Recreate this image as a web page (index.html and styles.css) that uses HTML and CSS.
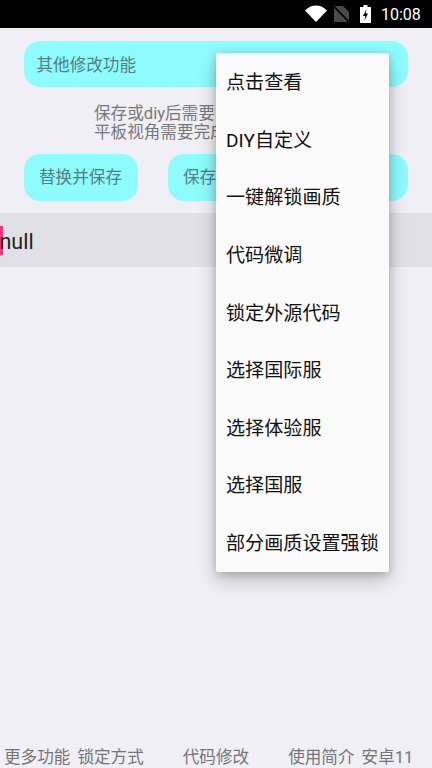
FILE: index.html
```html
<!DOCTYPE html>
<html lang="zh">
<head>
<meta charset="utf-8">
<title>修改</title>
<link rel="stylesheet" href="styles.css">
</head>
<body>
<div class="screen">
  <header class="status">
    <svg class="wifi" viewBox="0 0 22 17"><path d="M0 5.6C3 2.2 6.8.4 11 .4s8 1.8 11 5.2L11 17z" fill="#fff"/></svg>
    <svg class="sim" viewBox="0 0 15 16"><path d="M0 0h9l6 6v10H0z" fill="#4a4a4a"/><path d="M0 .5L15 16" stroke="#000" stroke-width="1.6"/></svg>
    <svg class="battery" viewBox="0 0 11 18"><path d="M3.500 0h4v2H11v16H0V2h3.500z" fill="#fff"/><path d="M6.500 4L3 11h2.300L4.500 15.500 8 8.500H5.700z" fill="#000"/></svg>
    <span class="time">10:08</span>
  </header>
  <main class="content">
    <div class="btn wide">其他修改功能</div>
    <p class="hint">保存或diy后需要<br>平板视角需要完成</p>
    <div class="btn-row">
      <div class="btn small">替换并保存</div>
      <div class="btn grow">保存</div>
    </div>
    <div class="editor"><span class="caret"></span><span class="code">null</span></div>
  </main>
  <nav class="tabs">
    <span class="tab t1">更多功能</span>
    <span class="tab t2">锁定方式</span>
    <span class="tab t3">代码修改</span>
    <span class="tab t4">使用简介</span>
    <span class="tab t5">安卓11</span>
  </nav>
  <ul class="menu">
    <li>点击查看</li>
    <li>DIY自定义</li>
    <li>一键解锁画质</li>
    <li>代码微调</li>
    <li>锁定外源代码</li>
    <li>选择国际服</li>
    <li>选择体验服</li>
    <li>选择国服</li>
    <li>部分画质设置强锁</li>
  </ul>
</div>
</body>
</html>
```
FILE: styles.css
```css
* { box-sizing: border-box; }
html, body { margin: 0; padding: 0; }
body { font-family: Roboto, "Noto Sans CJK SC", sans-serif; }
.screen {
  position: relative;
  width: 432px;
  height: 768px;
  overflow: hidden;
  background: #f0eff5;
  display: flex;
  flex-direction: column;
}
.status {
  height: 28px;
  flex: none;
  background: #000;
  display: flex;
  align-items: center;
  padding-left: 305px;
}
.wifi { width: 22px; height: 17px; margin-top: -1px; }
.sim { width: 15px; height: 16px; margin-left: 7px; margin-top: -1px; }
.battery { width: 11px; height: 18px; margin-left: 11px; margin-top: -1px; }
.time { color: #fff; font-size: 16px; margin-left: 10px; margin-top: 1px; line-height: 20px; }
.content { flex: 1; display: flex; flex-direction: column; padding-top: 13px; }
.btn {
  background: #8efbfd;
  color: #527f84;
  font-size: 16.600px;
  height: 47px;
  line-height: 48px;
  border-radius: 16px;
  white-space: nowrap;
}
.wide { margin: 0 24px; padding-left: 12.500px; height: 46px; line-height: 49px; }
.hint {
  margin: 17px 0 0;
  padding-left: 94px;
  font-size: 16.600px;
  line-height: 19px;
  height: 35px;
  color: #78787c;
}
.btn-row { display: flex; gap: 30px; margin: 15px 24px 0; }
.small { width: 114px; text-align: center; padding-right: 1px; }
.grow { flex: 1; padding-left: 15px; }
.editor {
  margin-top: 12px;
  height: 54px;
  background: #e1e0e6;
  display: flex;
  align-items: center;
}
.caret { width: 2.500px; height: 29px; background: #f7347f; flex: none; }
.code { font-size: 21.500px; color: #222; margin-left: -3px; margin-top: 2px; }
.tabs {
  flex: none;
  height: 22px;
  display: flex;
  color: #757579;
  font-size: 16.600px;
  line-height: 24px;
  padding-left: 4px;
}
.tab { white-space: nowrap; }
.t2 { margin-left: 7px; }
.t3 { margin-left: 39px; }
.t4 { margin-left: 39px; }
.t5 { margin-left: 7px; }
.menu {
  position: absolute;
  left: 216px;
  top: 53px;
  width: 173px;
  height: 519px;
  margin: 0;
  padding: 0 0 1px;
  list-style: none;
  background: #fafafa;
  border-radius: 2px;
  box-shadow: 0 8px 20px rgba(0, 0, 0, .22), 0 2px 8px rgba(0, 0, 0, .18);
  display: flex;
  flex-direction: column;
}
.menu li {
  flex: 1;
  display: flex;
  align-items: center;
  padding: 0 0 1px 10px;
  font-size: 19.100px;
  color: #111;
  white-space: nowrap;
}
```
